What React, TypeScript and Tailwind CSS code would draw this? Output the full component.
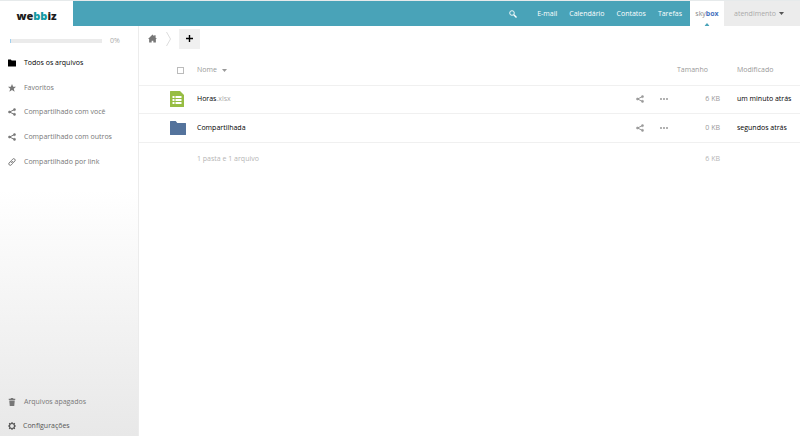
import React from 'react';

type IconProps = { className?: string };

const ShareIcon = ({ className }: IconProps) => (
  <svg viewBox="0 0 16 16" className={className} fill="currentColor" stroke="currentColor" aria-hidden="true">
    <path d="M13 3.200L3 8l10 4.800" fill="none" strokeWidth="2" />
    <circle cx="13" cy="3.200" r="2.200" />
    <circle cx="3" cy="8" r="2.200" />
    <circle cx="13" cy="12.800" r="2.200" />
  </svg>
);

const FolderIcon = ({ className }: IconProps) => (
  <svg viewBox="0 0 16 14" className={className} fill="currentColor" aria-hidden="true">
    <path d="M.5 0h5.200l1.600 2h8.200a.5.5 0 0 1 .5.5v11a.5.5 0 0 1-.5.5H.5a.5.5 0 0 1-.5-.5V.5A.5.5 0 0 1 .5 0z" />
  </svg>
);

const StarIcon = ({ className }: IconProps) => (
  <svg viewBox="0 0 16 16" className={className} fill="currentColor" aria-hidden="true">
    <path d="M8 0l2.300 5.500H16l-4.500 3.800 1.800 6.200L8 12l-5.300 3.500 1.800-6.200L0 5.500h5.700z" />
  </svg>
);

const LinkIcon = ({ className }: IconProps) => (
  <svg viewBox="0 0 16 16" className={className} fill="none" stroke="currentColor" strokeWidth="2" strokeLinecap="round" aria-hidden="true">
    <path d="M6.600 9.400a2.800 2.800 0 0 1 0-4L9.400 2.300a2.800 2.800 0 0 1 4.200 4L11.300 8.800M9.400 6.600a2.800 2.800 0 0 1 0 4l-2.800 3.100a2.800 2.800 0 0 1-4.200-4l2.300-2.500" />
  </svg>
);

const TrashIcon = ({ className }: IconProps) => (
  <svg viewBox="0 0 16 16" className={className} fill="currentColor" aria-hidden="true">
    <path d="M6 0h4l1 1.500h3.500V4h-13V1.500H5zM2.500 5h11l-1 11h-9z" />
  </svg>
);

const GearIcon = ({ className }: IconProps) => (
  <svg viewBox="0 0 16 16" className={className} fill="none" stroke="currentColor" aria-hidden="true">
    <circle cx="8" cy="8" r="5" strokeWidth="2.200" />
    <path d="M8 0v3M8 13v3M0 8h3M13 8h3M2.300 2.300l2.200 2.200M11.500 11.500l2.200 2.200M2.300 13.700l2.200-2.200M11.500 4.500l2.200-2.200" strokeWidth="2.200" />
  </svg>
);

const HomeIcon = ({ className }: IconProps) => (
  <svg viewBox="0 0 16 16" className={className} fill="currentColor" aria-hidden="true">
    <path d="M8 1l3 3V2h2.500v4.500L16 9h-2v6H9.500v-3h-3v3H2V9H0z" />
  </svg>
);

const SearchIcon = ({ className }: IconProps) => (
  <svg viewBox="0 0 16 16" className={className} fill="none" stroke="currentColor" aria-hidden="true">
    <circle cx="6" cy="6" r="4.600" strokeWidth="1.800" />
    <path d="M9.500 9.500l5.500 5.500" strokeWidth="2.800" />
  </svg>
);

const CaretIcon = ({ className }: IconProps) => (
  <svg viewBox="0 0 10 6" className={className} fill="currentColor" aria-hidden="true">
    <path d="M0 0h10L5 6z" />
  </svg>
);

const SheetIcon = ({ className }: IconProps) => (
  <svg viewBox="0 0 14 16" className={className} aria-hidden="true">
    <path d="M.5 0H10l4 4v11.500a.5.5 0 0 1-.5.5H.5a.5.5 0 0 1-.5-.5V.5A.5.5 0 0 1 .5 0z" fill="#97bd43" />
    <path d="M2.500 5h2v2h-2zM5.500 5h6v2h-6zM2.500 8h2v2h-2zM5.500 8h6v2h-6zM2.500 11h2v2h-2zM5.500 11h6v2h-6z" fill="#fff" />
  </svg>
);

const DotsIcon = ({ className }: IconProps) => (
  <svg viewBox="0 0 16 4" className={className} fill="currentColor" aria-hidden="true">
    <circle cx="2" cy="2" r="2" />
    <circle cx="8" cy="2" r="2" />
    <circle cx="14" cy="2" r="2" />
  </svg>
);

const filters = [
  { label: 'Todos os arquivos', Icon: FolderIcon, active: true },
  { label: 'Favoritos', Icon: StarIcon, active: false },
  { label: 'Compartilhado com você', Icon: ShareIcon, active: false },
  { label: 'Compartilhado com outros', Icon: ShareIcon, active: false },
  { label: 'Compartilhado por link', Icon: LinkIcon, active: false },
];

const files = [
  { name: 'Horas', ext: '.xlsx', size: '6 KB', modified: 'um minuto atrás', folder: false },
  { name: 'Compartilhada', ext: '', size: '0 KB', modified: 'segundos atrás', folder: true },
];

function Header() {
  return (
    <header className="flex h-[26px] border-t border-[#e6eaeb] bg-[#49a3b8] text-white">
      <a href="#" className="flex w-[73px] items-center justify-center bg-white pt-1 text-[11px] leading-none font-extrabold text-[#1c1c1c]">
        we<span className="text-[#149aa3]">bb</span>iz
      </a>
      <nav className="ml-auto flex items-center gap-3 pr-2 font-medium">
        <button type="button" aria-label="Buscar" className="mr-2">
          <SearchIcon className="size-2" />
        </button>
        <a href="#">E-mail</a>
        <a href="#">Calendário</a>
        <a href="#">Contatos</a>
        <a href="#">Tarefas</a>
      </nav>
      <a href="#" className="relative flex w-[34px] items-center justify-center bg-white text-[#888]">
        sky<span className="font-bold text-[#4a74c0]">box</span>
        <CaretIcon className="absolute bottom-0 left-1/2 h-[3px] w-[5px] -translate-x-1/2 rotate-180 text-[#49a3b8]" />
      </a>
      <button type="button" className="flex w-[76px] items-center gap-[3px] bg-[#ececec] pl-[10px] text-[#aaa]">
        atendimento
        <CaretIcon className="h-[3px] w-[5px] text-[#555]" />
      </button>
    </header>
  );
}

function Sidebar() {
  return (
    <aside className="flex w-[139px] shrink-0 flex-col border-r border-[#ececec] bg-linear-to-b from-white from-40% to-[#e8e8e8] text-[#777]">
      <div className="flex h-[25px] items-center gap-2 pt-[5px] pl-[10px] text-[#aaa]">
        <div className="h-1 w-[92px] border-l border-[#9fd0f0] bg-[#ebebeb]" />
        0%
      </div>
      <nav className="grid h-[123px] grid-rows-5">
        {filters.map(({ label, Icon, active }) => (
          <a key={label} href="#" className={active ? 'flex items-center gap-2 pl-2 text-black' : 'flex items-center gap-2 pl-2'}>
            <Icon className="size-2" />
            {label}
          </a>
        ))}
      </nav>
      <div className="mt-auto flex flex-col gap-1">
        <a href="#" className="flex h-5 items-center gap-2 pl-2">
          <TrashIcon className="size-2" />
          Arquivos apagados
        </a>
        <button type="button" className="flex h-5 items-center gap-[7px] pl-2 text-[#555]">
          <GearIcon className="size-2" />
          Configurações
        </button>
      </div>
    </aside>
  );
}

function FileTable() {
  return (
    <table className="w-full table-fixed border-collapse text-left text-[#999]">
      <colgroup>
        <col className="w-[58px]" />
        <col />
        <col className="w-6" />
        <col className="w-6" />
        <col className="w-11" />
        <col className="w-20" />
      </colgroup>
      <thead>
        <tr className="h-[29px] border-b border-[#f0f0f0]">
          <th className="pl-[38px]">
            <input type="checkbox" aria-label="Selecionar tudo" className="block size-[7px] appearance-none border border-[#bbb] bg-white" />
          </th>
          <th className="font-normal">
            <button type="button" className="flex items-center gap-[5px]">
              Nome
              <CaretIcon className="h-[3px] w-[5px]" />
            </button>
          </th>
          <th />
          <th />
          <th className="pl-px font-normal">Tamanho</th>
          <th className="pl-[17px] font-normal">Modificado</th>
        </tr>
      </thead>
      <tbody>
        {files.map((f) => (
          <tr key={f.name} className={f.folder ? 'h-[29px] border-b border-[#f0f0f0]' : 'h-7 border-b border-[#f0f0f0]'}>
            <td className="pl-[31px]">
              {f.folder ? <FolderIcon className="h-[14px] w-4 text-[#54739c]" /> : <SheetIcon className="h-4 w-[14px]" />}
            </td>
            <td>
              <a href="#" className="text-black">
                {f.name}
                <span className="text-[#aaa]">{f.ext}</span>
              </a>
            </td>
            <td>
              <button type="button" aria-label="Compartilhar" className="mx-auto block">
                <ShareIcon className="size-2" />
              </button>
            </td>
            <td>
              <button type="button" aria-label="Mais ações" className="mx-auto block">
                <DotsIcon className="h-[2px] w-2" />
              </button>
            </td>
            <td className="text-right">{f.size}</td>
            <td className="pl-[17px] whitespace-nowrap text-black">{f.modified}</td>
          </tr>
        ))}
      </tbody>
      <tfoot>
        <tr className="h-[34px] text-[#b5b5b5]">
          <td />
          <td>1 pasta e 1 arquivo</td>
          <td />
          <td />
          <td className="text-right">6 KB</td>
          <td />
        </tr>
      </tfoot>
    </table>
  );
}

export default function App() {
  return (
    <div className="flex min-h-screen flex-col bg-white font-['Open_Sans','Noto_Sans',sans-serif] text-[7px] leading-[10px]">
      <Header />
      <div className="flex grow">
        <Sidebar />
        <main className="grow">
          <div className="mb-[5px] flex h-[25px] items-center pl-[9px]">
            <a href="#" aria-label="Início" className="text-[#777]">
              <HomeIcon className="size-[9px]" />
            </a>
            <svg viewBox="0 0 5 14" className="ml-[9px] h-[14px] w-[5px]" fill="none" stroke="#ddd" aria-hidden="true">
              <path d="M.5 0l4 7-4 7" />
            </svg>
            <button type="button" aria-label="Novo" className="ml-2 flex h-5 w-[21px] items-center justify-center bg-[#f0f0f0] text-black">
              <svg viewBox="0 0 7 7" className="size-[7px]" fill="currentColor" aria-hidden="true">
                <path d="M2.800 0h1.400v2.800H7v1.400H4.200V7H2.800V4.200H0V2.800h2.800z" />
              </svg>
            </button>
          </div>
          <FileTable />
        </main>
      </div>
    </div>
  );
}
